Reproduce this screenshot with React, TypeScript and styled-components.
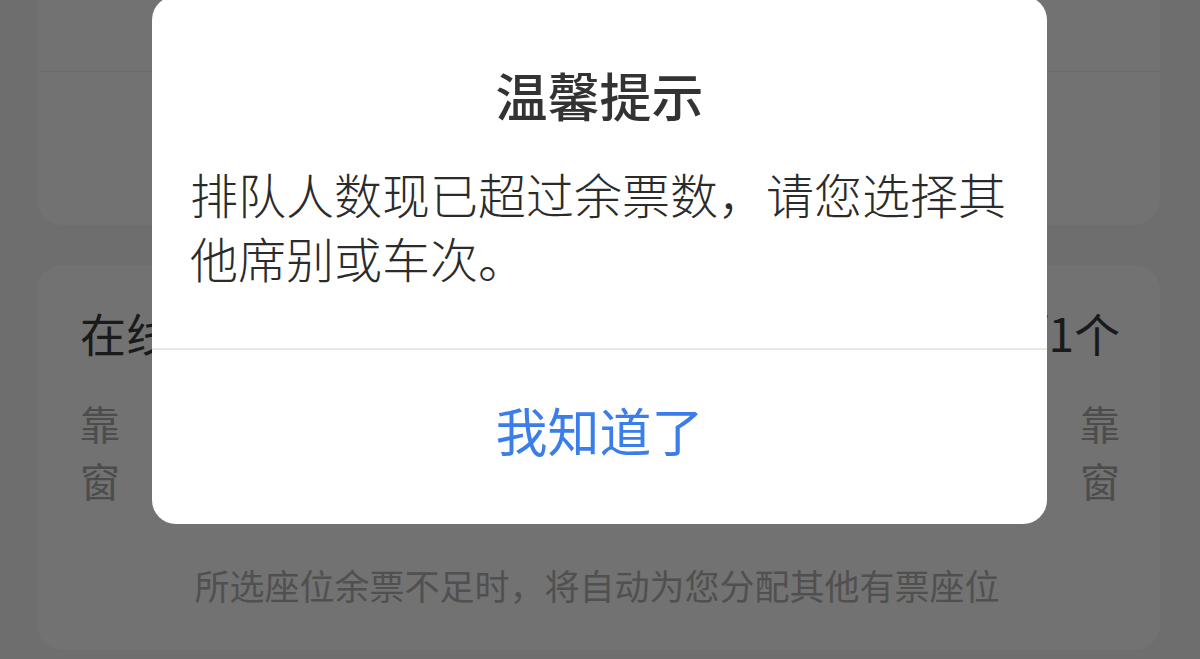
import React from 'react'
import styled, { createGlobalStyle } from 'styled-components'

const GlobalStyle = createGlobalStyle`
  html, body {
    margin: 0;
    padding: 0;
    background: #f7f7f7;
    font-family: "Noto Sans CJK SC", "Noto Sans", sans-serif;
  }
`

const App = () => {
  return (
    <>
      <GlobalStyle />
      <Page>
        <InfoCard>
          <CardTop />
          <CardDivider />
          <CardBottom />
        </InfoCard>
        <SeatCard>
          <SeatHeader>
            <HeaderTitle>在线选座</HeaderTitle>
            <HeaderCount>已选0/1个</HeaderCount>
          </SeatHeader>
          <SeatRow>
            <WindowLabel>靠<br />窗</WindowLabel>
            <WindowLabel>靠<br />窗</WindowLabel>
          </SeatRow>
          <SeatNote>所选座位余票不足时，将自动为您分配其他有票座位</SeatNote>
        </SeatCard>
      </Page>
      <Mask />
      <Dialog>
        <DialogTitle>温馨提示</DialogTitle>
        <DialogText>排队人数现已超过余票数，请您选择其他席别或车次。</DialogText>
        <DialogButton>我知道了</DialogButton>
      </Dialog>
    </>
  )
}

const Page = styled.div`
  height: 659px;
  overflow: hidden;
  padding: 0 40px 0 37px;
  display: flex;
  flex-direction: column;
  gap: 40px;
`

const Card = styled.div`
  background: #ffffff;
  border-radius: 26px;
`

const InfoCard = styled(Card)`
  margin-top: -60px;
  display: flex;
  flex-direction: column;
`

const CardTop = styled.div`
  height: 131px;
`

const CardDivider = styled.div`
  height: 1px;
  margin-left: 3px;
  background: #f0f0f0;
`

const CardBottom = styled.div`
  height: 153px;
`

const SeatCard = styled(Card)`
  height: 385px;
  flex-shrink: 0;
  box-sizing: border-box;
  padding: 42px 40px 0 43px;
  display: flex;
  flex-direction: column;
`

const SeatHeader = styled.div`
  display: flex;
  justify-content: space-between;
  align-items: center;
  height: 50px;
`

const HeaderTitle = styled.div`
  font-size: 46px;
  line-height: 50px;
  color: #3a3a3a;
`

const HeaderCount = styled.div`
  font-size: 46px;
  line-height: 50px;
  color: #3a3a3a;
`

const SeatRow = styled.div`
  display: flex;
  justify-content: space-between;
  margin-top: 38px;
`

const WindowLabel = styled.div`
  font-size: 40px;
  line-height: 57px;
  color: #aaaaaa;
`

const SeatNote = styled.div`
  margin-top: 56px;
  text-align: center;
  font-size: 35px;
  line-height: 40px;
  color: #b4b4b4;
  margin-left: -6px;
`

const Mask = styled.div`
  position: fixed;
  inset: 0;
  background: rgba(0, 0, 0, 0.553);
`

const Dialog = styled.div`
  position: fixed;
  top: -4px;
  left: 152px;
  width: 895px;
  background: #ffffff;
  border-radius: 24px;
  display: flex;
  flex-direction: column;
  padding-top: 69px;
`

const DialogTitle = styled.div`
  text-align: center;
  font-size: 52px;
  line-height: 60px;
  font-weight: 500;
  color: #333333;
`

const DialogText = styled.div`
  margin-top: 36px;
  padding: 0 38px 59px;
  font-size: 48px;
  line-height: 64px;
  font-weight: 300;
  color: #2b2b2b;
  border-bottom: 2px solid #e8e8e8;
`

const DialogButton = styled.div`
  height: 174px;
  display: flex;
  align-items: center;
  justify-content: center;
  padding-bottom: 16px;
  box-sizing: border-box;
  font-size: 52px;
  color: #3b7ee9;
`

export default App
